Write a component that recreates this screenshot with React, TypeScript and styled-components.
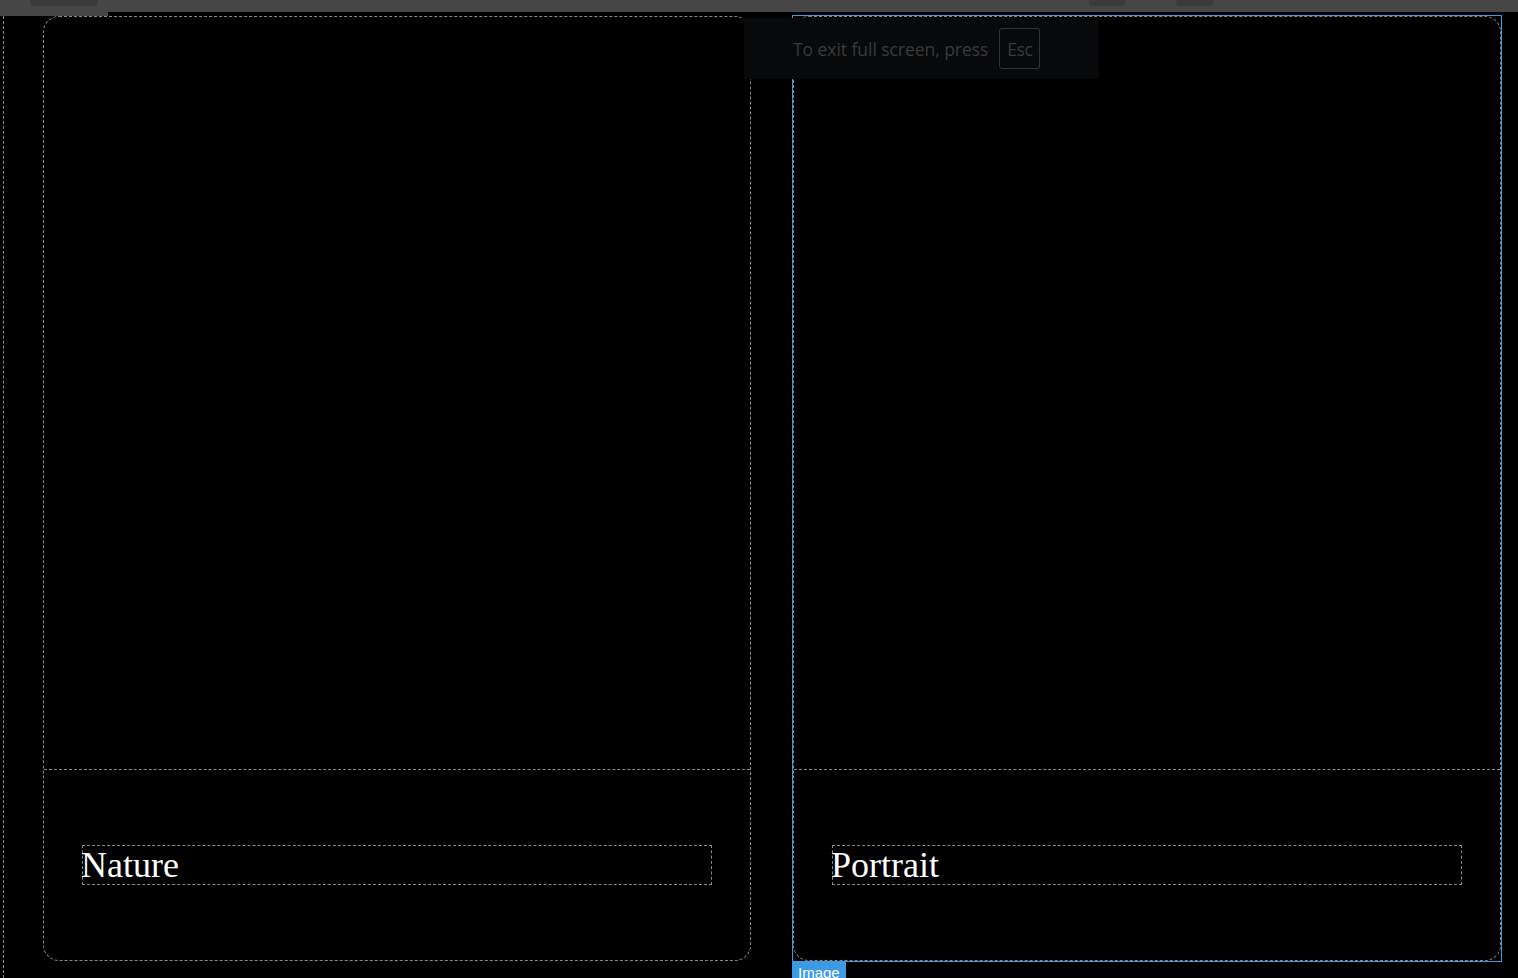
import styled, { createGlobalStyle, css } from 'styled-components';

const GlobalStyle = createGlobalStyle`
  html, body {
    margin: 0;
    padding: 0;
    background: #000;
    height: 100%;
    overflow: hidden;
  }
  #root {
    height: 100%;
  }
`;

const Page = styled.div`
  height: 100vh;
  display: flex;
  flex-direction: column;
  background: #000;
  position: relative;
`;

const TopBar = styled.div`
  height: 12px;
  flex-shrink: 0;
  background: #464646;
  display: flex;
  align-items: flex-start;
`;

const Tab = styled.div<{ $left: number; $width: number }>`
  margin-left: ${({ $left }) => $left}px;
  width: ${({ $width }) => $width}px;
  height: 6px;
  background: #3b3b3b;
  border-radius: 0 0 4px 4px;
`;

const Ledge = styled.div`
  width: 108px;
  height: 4px;
  flex-shrink: 0;
  background: #464646;
`;

const Canvas = styled.div`
  flex: 1;
  margin-left: 3px;
  border-left: 1px dashed #8a8a8a;
  padding-left: 39px;
  display: flex;
  gap: 42px;
  align-items: flex-start;
`;

const Card = styled.div<{ $selected?: boolean }>`
  position: relative;
  width: 708px;
  height: 945px;
  box-sizing: border-box;
  border: 1px dashed #8a8a8a;
  border-radius: 16px;
  display: flex;
  flex-direction: column;

  ${({ $selected }) =>
    $selected &&
    css`
      &::before {
        content: '';
        position: absolute;
        inset: -2px;
        border: 1px solid #3d9be6;
        pointer-events: none;
      }
    `}
`;

const ImageArea = styled.div`
  height: 752px;
  flex-shrink: 0;
  border-bottom: 1px dashed #8a8a8a;
`;

const CaptionArea = styled.div`
  flex: 1;
  display: flex;
  align-items: center;
  padding: 0 38px;
`;

const Caption = styled.div`
  flex: 1;
  height: 40px;
  box-sizing: border-box;
  border: 1px dashed #8a8a8a;
  color: #fff;
  font-family: 'Liberation Serif', 'Times New Roman', serif;
  font-size: 36px;
  line-height: 38px;
  text-indent: -2px;
  white-space: nowrap;
`;

const Badge = styled.div`
  position: absolute;
  left: -2px;
  top: calc(100% + 1px);
  background: #3d9be6;
  color: #fff;
  font-family: 'Liberation Sans', Arial, sans-serif;
  font-size: 15px;
  line-height: 24px;
  padding: 0 6px;
  width: 54px;
  box-sizing: border-box;
`;

const Notice = styled.div`
  position: absolute;
  top: 18px;
  left: 744px;
  width: 355px;
  height: 61px;
  box-sizing: border-box;
  background: #08090b;
  display: flex;
  align-items: center;
  padding-left: 49px;
  gap: 11px;
  font-family: 'Open Sans', 'Noto Sans', sans-serif;
  font-size: 17.5px;
  letter-spacing: -0.05px;
  color: #3a3a3a;
  white-space: nowrap;
`;

const Key = styled.div`
  width: 41px;
  height: 41px;
  box-sizing: border-box;
  border: 1px solid #333;
  border-radius: 3px;
  display: flex;
  align-items: center;
  justify-content: center;
  letter-spacing: -0.5px;
`;

export default function App() {
  return (
    <Page>
      <GlobalStyle />
      <TopBar>
        <Tab $left={30} $width={68} />
        <Tab $left={991} $width={36} />
        <Tab $left={51} $width={37} />
      </TopBar>
      <Ledge />
      <Canvas>
        <Card>
          <ImageArea />
          <CaptionArea>
            <Caption>Nature</Caption>
          </CaptionArea>
        </Card>
        <Card $selected>
          <ImageArea />
          <CaptionArea>
            <Caption>Portrait</Caption>
          </CaptionArea>
          <Badge>Image</Badge>
        </Card>
      </Canvas>
      <Notice>
        To exit full screen, press
        <Key>Esc</Key>
      </Notice>
    </Page>
  );
}
